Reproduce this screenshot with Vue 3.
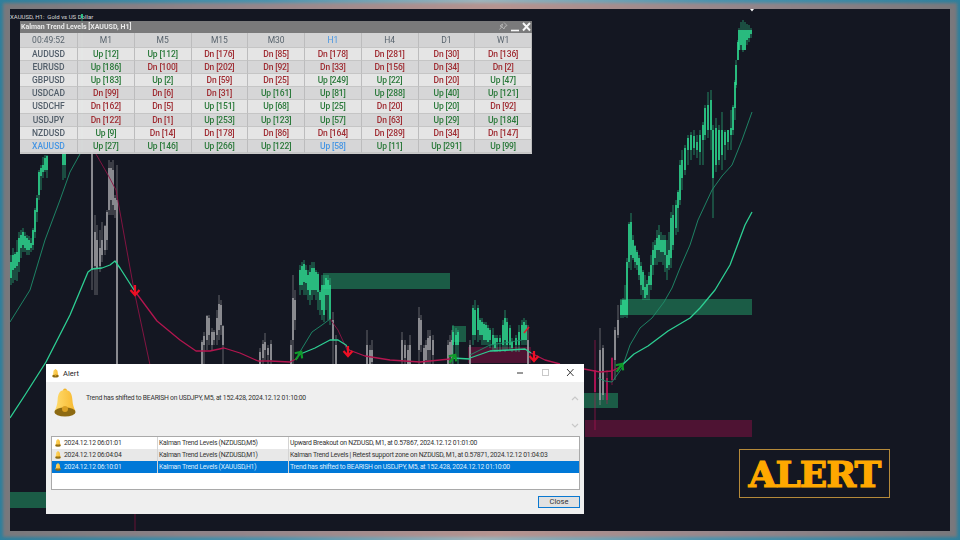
<template>
  <div class="screen">
    <div class="glow"></div>
    <div class="chart">
      <div class="chart-title">XAUUSD, H1:&nbsp; Gold vs US Dollar</div>

      <!-- price canvas, coordinates are page pixels -->
      <svg class="plot" viewBox="10 9 940 522" width="940" height="522">
        <rect v-for="z in zones" :key="z.x + '-' + z.y" :x="z.x" :y="z.y" :width="z.w" :height="z.h" :fill="z.c" />
        <g v-for="c in candles" :key="c.x">
          <line :x1="c.x" :x2="c.x" :y1="c.hi" :y2="c.lo" :stroke="c.color" stroke-width="0.8" opacity="0.7" />
          <rect :x="c.x - 0.8" :y="c.top" width="1.6" :height="c.bot - c.top" :fill="c.color" opacity="0.95" />
        </g>
        <polyline v-for="l in lines" :key="l.pts" :points="l.pts" fill="none" :stroke="l.c" :stroke-width="l.w" stroke-linejoin="round" />
        <path v-for="a in redArrows" :key="a[0]" class="arrow-red" :transform="`translate(${a[0]} ${a[1]})`" d="M0 -6V4M-4.5 -1L0 4L4.5 -1" />
        <path v-for="a in greenArrows" :key="a[0]" class="arrow-green" :transform="`translate(${a[0]} ${a[1]}) rotate(35)`" d="M0 6V-4M-4.5 1L0 -4L4.5 1" />
        <path d="M524 333L529 327" stroke="#e0182c" stroke-width="1.6" fill="none" />
        <path d="M750 9H754L752 11.5Z" fill="#fff" />
      </svg>

      <!-- dashboard window -->
      <div class="panel">
        <div class="panel-title">
          <span>Kalman Trend Levels [XAUUSD, H1]</span>
          <svg class="panel-btns" width="34" height="12" viewBox="0 0 34 12">
            <path d="M6 1.5L9 4.5L7 5.5L6 8L3.8 5.8L1.5 8.5M3.8 5.8L2 5L4.5 3Z" fill="none" stroke="#c4c4c4" stroke-width="0.8" />
            <path d="M13 9.5H21" stroke="#fff" stroke-width="1.6" />
            <path d="M25 2L32 9.5M32 2L25 9.5" stroke="#fff" stroke-width="1.9" />
          </svg>
        </div>
        <div class="grid">
          <div class="cell head first">00:49:52</div>
          <div v-for="tf in timeframes" :key="tf" class="cell head" :class="{ blue: tf === 'H1' }">{{ tf }}</div>
          <template v-for="(row, r) in rows" :key="row.name">
            <div class="cell sym first" :class="[r % 2 ? 'dark' : 'light', { blue: row.name === 'XAUUSD' }]">{{ row.name }}</div>
            <div
              v-for="(v, i) in row.vals"
              :key="i"
              class="cell"
              :class="[r % 2 ? 'dark' : 'light', v.up ? 'up' : 'dn', { blue: row.name === 'XAUUSD' && timeframes[i] === 'H1' }]"
            >{{ v.text }}</div>
          </template>
        </div>
      </div>

      <!-- terminal alert dialog -->
      <div class="dialog">
        <svg width="0" height="0" class="defs">
          <defs>
            <linearGradient id="bellBody" x1="0" y1="0" x2="1" y2="0">
              <stop offset="0" stop-color="#ffdc6e" />
              <stop offset="1" stop-color="#f7b82e" />
            </linearGradient>
          </defs>
          <symbol id="bell" viewBox="0 0 22 30">
            <circle cx="11" cy="2.6" r="2" fill="#f2b52a" />
            <path d="M11 2C5.5 2 4 6 3.6 12C3.3 17 2.2 19.5 .6 23H21.4C19.8 19.5 18.7 17 18.4 12C18 6 16.5 2 11 2Z" fill="url(#bellBody)" />
            <ellipse cx="11" cy="24" rx="10.6" ry="4.6" fill="#8d6a12" />
            <circle cx="11" cy="21" r="3" fill="#d99f22" />
          </symbol>
        </svg>
        <div class="dlg-title">
          <svg class="bell-sm" width="7" height="9"><use href="#bell" /></svg>
          <span class="dlg-name">Alert</span>
          <svg class="dlg-btns" width="60" height="10" viewBox="0 0 60 10">
            <path d="M0 5H6" stroke="#333" stroke-width="1" />
            <rect x="25.5" y="1.5" width="6" height="6" fill="none" stroke="#c9c9c9" />
            <path d="M50 1L56.5 8M56.5 1L50 8" stroke="#222" stroke-width="0.9" />
          </svg>
        </div>
        <div class="dlg-msg">
          <svg class="bell-lg" width="22" height="30"><use href="#bell" /></svg>
          <span class="msg-text">Trend has shifted to BEARISH on USDJPY, M5, at 152.428, 2024.12.12 01:10:00</span>
          <svg class="scroll" width="8" height="40" viewBox="0 0 8 40">
            <path d="M1 5L4 2L7 5M1 29L4 32L7 29" fill="none" stroke="#c8c8c8" stroke-width="1.2" />
          </svg>
        </div>
        <div class="list">
          <div v-for="(a, i) in alerts" :key="a.time" class="list-row" :class="{ alt: i === 1, sel: i === 2 }">
            <div class="col-time">
              <svg width="6" height="8"><use href="#bell" /></svg>
              {{ a.time }}
            </div>
            <div class="col-name">{{ a.name }}</div>
            <div class="col-text">{{ a.text }}</div>
          </div>
        </div>
        <div class="dlg-foot">
          <button class="close-btn">Close</button>
        </div>
      </div>

      <div class="badge">ALERT</div>
    </div>
  </div>
</template>

<script setup>
const timeframes = ['M1', 'M5', 'M15', 'M30', 'H1', 'H4', 'D1', 'W1']

const parseRow = (name, s) => ({
  name,
  vals: s.split(' ').map((t) => ({
    up: t[0] === 'U',
    text: `${t[0] === 'U' ? 'Up' : 'Dn'} [${t.slice(1)}]`,
  })),
})

const rows = [
  parseRow('AUDUSD', 'U12 U112 D176 D85 D178 D281 D30 D136'),
  parseRow('EURUSD', 'U186 D100 D202 D92 D33 D156 D34 D2'),
  parseRow('GBPUSD', 'U183 U2 D59 D25 U249 U22 D20 U47'),
  parseRow('USDCAD', 'D99 D6 D31 U161 U81 U288 U40 U121'),
  parseRow('USDCHF', 'D162 D5 U151 U68 U25 D20 U20 D92'),
  parseRow('USDJPY', 'D122 D1 U253 U123 U57 D63 U29 U184'),
  parseRow('NZDUSD', 'U9 D14 D178 D86 D164 D289 D34 D147'),
  parseRow('XAUUSD', 'U27 U146 U266 U122 U58 U11 U291 U99'),
]

const alerts = [
  { time: '2024.12.12 06:01:01', name: 'Kalman Trend Levels (NZDUSD,M5)', text: 'Upward Breakout on NZDUSD, M1, at 0.57867, 2024.12.12 01:01:00' },
  { time: '2024.12.12 06:04:04', name: 'Kalman Trend Levels (NZDUSD,M1)', text: 'Kalman Trend Levels | Retest support zone on NZDUSD, M1, at 0.57871, 2024.12.12 01:04:03' },
  { time: '2024.12.12 06:10:01', name: 'Kalman Trend Levels (XAUUSD,H1)', text: 'Trend has shifted to BEARISH on USDJPY, M5, at 152.428, 2024.12.12 01:10:00' },
]

const GREEN = '#2edc92'
const GRAY = '#a2a2a6'
const RED = '#c9125c'

// candle lists: [x, high, bodyTop, bodyBottom, low]
const greens = [
  [11,255,262,278,285],[13,248,255,270,283],[15,252,254,268,280],[17,240,252,266,281],[19,232,238,262,272],
  [21,230,235,248,258],[23,228,232,245,252],[25,232,236,248,252],[27,235,238,250,255],[29,236,240,250,255],
  [31,238,243,248,252],[33,228,230,245,250],[35,208,210,232,238],[37,195,198,212,222],[39,170,172,195,200],
  [41,165,168,176,190],[43,157,165,172,178],[45,155,158,170,172],[47,155,156,170,178],[63,150,150,165,180],[65,150,150,165,178],
  [82,14,14,18,154],
  [300,265,270,285,295],[302,262,266,285,290],[304,260,264,282,295],[306,265,270,283,295],[308,270,275,290,300],
  [310,265,272,295,305],[312,262,268,290,300],[314,262,268,290,295],[316,270,272,290,300],[318,272,274,292,310],
  [320,290,292,300,315],[322,275,285,310,320],[324,275,285,315,322],[326,275,278,295,310],[328,275,280,295,320],[330,278,285,320,325],
  [453,325,332,345,364],[456,328,335,345,360],[458,330,332,345,364],
  [473,305,308,335,345],[475,300,310,335,340],[478,305,308,330,342],[480,318,320,335,340],[482,318,322,335,345],
  [484,322,324,340,345],[486,322,325,340,345],[488,325,328,342,345],[490,328,330,340,348],[493,328,335,345,350],
  [495,335,338,348,352],[497,335,338,342,352],[500,335,338,342,352],[503,320,325,345,350],[505,310,318,340,352],
  [507,318,322,345,350],[510,325,328,345,350],[512,338,342,348,352],[516,335,338,345,352],[519,325,332,345,352],
  [522,320,325,340,345],[524,318,322,340,345],[526,320,325,340,345],
  [621,300,305,315,318],[623,298,300,315,318],[625,285,300,315,317],[627,258,262,315,318],[629,222,224,262,268],
  [631,213,222,255,270],[633,235,240,258,260],[635,245,246,262,268],[637,250,252,265,270],[639,255,258,275,280],
  [641,262,266,285,295],[643,270,272,290,300],[645,275,287,298,300],[647,280,284,295,300],[649,272,276,285,300],
  [651,255,265,285,290],[653,242,250,265,275],[655,240,245,258,265],[657,230,238,250,265],[659,225,235,250,262],
  [661,232,240,252,262],[663,235,240,252,265],[665,235,240,255,272],[667,240,255,268,280],[669,232,250,265,270],
  [671,212,218,258,268],[673,205,215,245,250],[676,200,205,228,235],[678,190,192,208,232],[680,160,165,200,205],
  [682,150,160,178,190],[685,145,148,170,175],[688,135,138,150,165],[691,132,135,150,160],[694,130,136,148,155],
  [697,135,142,150,158],[700,130,135,152,165],[703,122,125,140,165],[705,105,108,135,140],[708,92,105,130,138],
  [711,90,100,130,150],[713,125,130,178,218],[716,118,128,165,172],[719,125,130,160,165],[722,112,130,155,170],
  [725,130,132,145,160],[728,130,130,142,150],[731,110,128,135,150],[733,105,107,130,135],[735,80,82,108,120],
  [736,60,65,85,88],[738,40,42,60,60],[739,28,30,50,50],[741,22,30,45,50],[743,20,30,50,52],[745,22,30,50,50],
  [747,24,30,40,45],[749,25,30,38,42],[751,28,30,34,38],
]

const grays = [
  [92,150,150,270,290],[95,215,232,266,295],[97,225,240,268,295],[100,230,248,266,272],[102,222,240,255,262],
  [105,225,226,250,255],[107,210,212,240,250],[109,160,168,210,215],[111,162,168,200,215],[113,160,170,205,215],
  [115,195,198,210,218],[117,165,200,365,365],
  [202,340,342,364,364],[204,332,336,345,364],[207,315,316,340,350],[209,315,318,335,345],[212,328,332,345,350],
  [214,330,332,340,345],[217,310,318,335,345],[219,295,304,330,340],[221,300,305,325,335],[223,325,326,345,364],
  [260,348,352,364,364],[263,340,344,358,364],[265,333,342,350,360],[268,345,348,355,364],[271,340,344,360,364],
  [291,340,345,364,364],[293,275,298,340,364],[295,290,300,320,330],
  [333,312,320,340,364],[336,335,345,364,364],
  [367,330,345,364,364],[370,345,350,364,364],[372,340,350,362,364],
  [402,332,340,360,364],[405,340,345,358,364],[408,345,350,364,364],[410,335,345,364,364],[419,307,318,350,364],
  [421,315,320,345,352],[424,345,348,364,364],[426,340,345,360,364],[428,330,338,350,364],[430,330,336,350,364],[433,335,340,355,364],
  [448,340,345,364,364],[450,335,342,355,364],[452,330,340,360,364],[470,340,345,364,364],[528,325,340,364,364],
  [600,328,350,400,405],[603,345,348,395,400],[615,327,330,360,380],[618,305,320,335,338],
]

const reds = [
  [595,340,370,392,430],[607,370,378,400,404],[612,357,358,380,385],
]

const toCandles = (list, color) => list.map(([x, hi, top, bot, lo]) => ({ x, hi, top, bot, lo, color }))
const candles = [...toCandles(grays, GRAY), ...toCandles(greens, GREEN), ...toCandles(reds, RED)]

const zones = [
  { x: 323, y: 273, w: 127, h: 16, c: '#1b5c46' },
  { x: 620, y: 299, w: 132, h: 16, c: '#1b5c46' },
  { x: 584, y: 393, w: 34, h: 15, c: '#1b5c46' },
  { x: 10, y: 492, w: 36, h: 16, c: '#1b5c46' },
  { x: 452, y: 326, w: 14, h: 16, c: '#1b5c46' },
  { x: 585, y: 420, w: 167, h: 17, c: '#4e1333' },
  { x: 468, y: 347, w: 63, h: 16, c: '#4e1333' },
]

const lines = [
  { pts: '10,322 30,290 45,240 60,200 70,172 80,154', c: '#1f8f6c', w: 0.9 },
  { pts: '96,154 108,175 116,190 134,290 150,365', c: '#8f1445', w: 0.9 },
  { pts: '135,514 135,531', c: '#6d1238', w: 0.9 },
  { pts: '298,355 312,332 322,325 330,319', c: '#1f8f6c', w: 0.9 },
  { pts: '330,319 338,330 348,352', c: '#8f1445', w: 0.9 },
  { pts: '470,355 490,345 510,342 522,340', c: '#1f8f6c', w: 0.9 },
  { pts: '598,378 605,381 612,382 622,368 630,345 640,328 652,318 664,302 672,288 680,268 690,245 698,220 712,190 722,176 732,165 742,140 752,112', c: '#1f8f6c', w: 0.9 },
  { pts: '10,418 25,395 46,362', c: '#2dcf93', w: 1.3 },
  { pts: '46,362 70,315 88,272 92,269 102,268 110,265 115,261 120,268 134,290', c: '#2dcf93', w: 1.3 },
  { pts: '134,290 157,321 180,340 196,351 210,351 224,348 240,353 258,361 270,361 290,362 298,358', c: '#b3164f', w: 1.3 },
  { pts: '298,355 315,348 330,340 338,340 346,345 349,350', c: '#2dcf93', w: 1.3 },
  { pts: '349,350 365,356 390,360 420,362 450,359', c: '#b3164f', w: 1.3 },
  { pts: '452,358 470,359', c: '#2dcf93', w: 1.3 },
  { pts: '470,358 490,351 510,350 525,349 531,353', c: '#2dcf93', w: 1.3 },
  { pts: '531,353 545,360 560,364', c: '#b3164f', w: 1.3 },
  { pts: '584,369 600,372 612,371 620,367', c: '#b3164f', w: 1.3 },
  { pts: '620,367 634,354 648,346 668,331 690,318 700,308 715,290 730,265 745,225 752,212', c: '#2dcf93', w: 1.3 },
]

const redArrows = [[135, 291], [348, 352], [534, 357]]
const greenArrows = [[299, 355], [453, 358], [620, 367]]
</script>

<style>
html, body {
  margin: 0;
  background: #3f8aa6;
}
</style>

<style scoped>
.screen {
  position: relative;
  width: 960px;
  height: 540px;
  padding: 9px 10px;
  box-sizing: border-box;
  display: flex;
  overflow: hidden;
  background: linear-gradient(90deg, #2f7f9c 0%, #4b93ae 28%, #9db5bd 50%, #4b93ae 74%, #2f7f9c 100%);
  font-family: Roboto, "Noto Sans", sans-serif;
}

/* rosy halo round the chart */
.glow {
  position: absolute;
  inset: 3px;
  background: linear-gradient(90deg, #78787c 0%, #93858a 25%, #b69490 52%, #93858a 78%, #78787c 100%);
  filter: blur(1.5px);
}

.chart {
  position: relative;
  flex: 1;
  background: #141722;
  overflow: hidden;
}

.chart-title {
  position: absolute;
  left: 0;
  top: 3px;
  font-size: 6px;
  line-height: 9px;
  color: #d8d8d8;
  white-space: nowrap;
}

.plot {
  position: absolute;
  left: 0;
  top: 0;
}

.arrow-red {
  fill: none;
  stroke: #ee0f24;
  stroke-width: 2.2;
}

.arrow-green {
  fill: none;
  stroke: #0f9a2a;
  stroke-width: 2.2;
}

/* dashboard */
.panel {
  position: absolute;
  left: 10px;
  top: 12px;
  width: 512px;
  opacity: 0.97;
  background: #cfcfcf;
  box-sizing: border-box;
  padding-bottom: 1px;
}

.panel-title {
  height: 12px;
  background: #7e7e7e;
  color: #f0f0f0;
  font-size: 7px;
  font-weight: 700;
  line-height: 12px;
  display: flex;
  justify-content: space-between;
  white-space: nowrap;
}

.panel-title span {
  padding-left: 1px;
}

.panel-btns {
  flex: none;
}

.grid {
  display: grid;
  grid-template-columns: 58px repeat(8, 1fr);
  grid-template-rows: 14.6px repeat(8, 13.2px);
}

.cell {
  display: flex;
  align-items: center;
  justify-content: center;
  font-size: 8.5px;
  letter-spacing: -0.15px;
  font-weight: 500;
  border-right: 1px solid #c2c2c2;
  border-bottom: 1px solid #cbcbcb;
  box-sizing: border-box;
}

.head {
  background: #dadada;
  color: #5b6670;
  font-weight: 400;
  letter-spacing: 0;
}

.sym {
  color: #56626e;
  letter-spacing: 0;
}

.light {
  background: #ececec;
}

.dark {
  background: #dddddd;
}

.up {
  color: #2c7d3c;
}

.dn {
  color: #a52f35;
}

.cell.blue {
  color: #4a9bea;
}

/* alert dialog */
.dialog {
  position: absolute;
  left: 36px;
  top: 355px;
  width: 538px;
  height: 150px;
  background: #efefef;
  display: flex;
  flex-direction: column;
}

.defs {
  position: absolute;
}

.dlg-title {
  height: 18px;
  flex: none;
  background: #fff;
  display: flex;
  align-items: center;
  padding-left: 6px;
}

.dlg-name {
  margin-left: 4px;
  font-size: 7.5px;
  color: #222;
}

.dlg-btns {
  margin-left: auto;
  margin-right: 7px;
}

.dlg-msg {
  height: 54px;
  flex: none;
  display: flex;
  align-items: flex-start;
  box-sizing: border-box;
  padding: 6px 5px 0 8px;
}

.msg-text {
  margin-left: 10px;
  margin-top: 6px;
  font-size: 6.8px;
  letter-spacing: -0.24px;
  color: #333;
  white-space: nowrap;
}

.scroll {
  margin-left: auto;
  margin-top: 7px;
}

.list {
  margin: 0 4px 0 5px;
  height: 54px;
  flex: none;
  box-sizing: border-box;
  background: #fff;
  border: 1px solid #a9a9a9;
}

.list-row {
  height: 12px;
  display: grid;
  grid-template-columns: 105px 131px 1fr;
  font-size: 6.8px;
  letter-spacing: -0.24px;
  line-height: 12px;
  color: #333;
  white-space: nowrap;
}

.list-row.alt {
  background: #e8e8e8;
}

.list-row.sel {
  background: #0078d7;
  color: #dfefff;
}

.col-time {
  padding-left: 3px;
  display: flex;
  align-items: center;
  gap: 3px;
}

.col-name,
.col-text {
  padding-left: 1px;
  border-left: 1px solid #d4d4d4;
}

.dlg-foot {
  flex: 1;
  display: flex;
  justify-content: flex-end;
  align-items: flex-start;
  padding: 6px 4px 0 0;
}

.close-btn {
  width: 42px;
  height: 12px;
  padding: 0;
  box-sizing: border-box;
  border: 1px solid #0a78d0;
  background: #e1e1e1;
  color: #333;
  font-family: inherit;
  font-size: 7.5px;
  line-height: 10px;
}

.badge {
  position: absolute;
  left: 729px;
  top: 440px;
  width: 151px;
  height: 49px;
  box-sizing: border-box;
  border: 1px solid #b58a3a;
  display: flex;
  align-items: center;
  justify-content: center;
  font-family: "DejaVu Serif", serif;
  font-weight: 700;
  font-size: 36px;
  letter-spacing: -1px;
  color: #ffa800;
  -webkit-text-stroke: 1.2px #ffa800;
}
</style>
